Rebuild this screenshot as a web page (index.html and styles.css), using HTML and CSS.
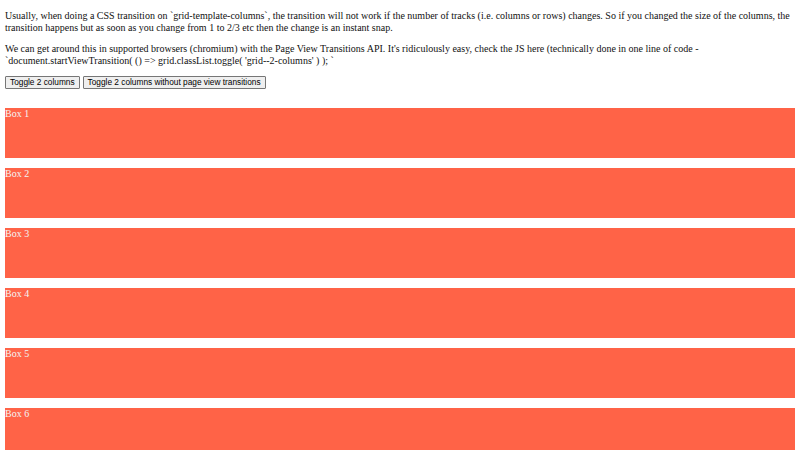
FILE: index.html
```html
<!DOCTYPE html>
<html>
<head>
<meta charset="utf-8">
<link rel="stylesheet" href="styles.css">
</head>
<body>
<p>Usually, when doing a CSS transition on `grid-template-columns`, the transition will not work if the number of tracks (i.e. columns or rows) changes. So if you changed the size of the columns, the transition happens but as soon as you change from 1 to 2/3 etc then the change is an instant snap.</p>
<p>We can get around this in supported browsers (chromium) with the Page View Transitions API. It's ridiculously easy, check the JS here (technically done in one line of code - `document.startViewTransition( () =&gt; grid.classList.toggle( 'grid--2-columns' ) ); `</p>
<div class="controls">
<button class="btn">Toggle 2 columns</button>
<button class="btn">Toggle 2 columns without page view transitions</button>
</div>
<div class="grid">
<div class="box">Box 1</div>
<div class="box">Box 2</div>
<div class="box">Box 3</div>
<div class="box">Box 4</div>
<div class="box">Box 5</div>
<div class="box">Box 6</div>
</div>
</body>
</html>
```
FILE: styles.css
```css
html, body {
  margin: 0;
  padding: 0;
}
body {
  padding: 0 5px;
  font-family: "Liberation Serif", "Times New Roman", serif;
  font-size: 10px;
  line-height: 11.5px;
  color: #111;
  background: #fff;
}
p {
  margin: 10px 0;
}
.controls {
  display: flex;
  gap: 3px;
  margin-top: 9px;
}
.btn {
  font-family: "Liberation Sans", Arial, sans-serif;
  font-size: 8.3px;
  line-height: 9px;
  height: 13px;
  padding: 0 4px;
  margin: 0;
  background: #efefef;
  border: 1px solid #767676;
  border-radius: 1px;
  color: #000;
}
.grid {
  display: grid;
  gap: 10px;
  margin-top: 19px;
}
.box {
  height: 50px;
  background: tomato;
  color: #f4f4f4;
  font-size: 10px;
  line-height: 11.5px;
}
```
